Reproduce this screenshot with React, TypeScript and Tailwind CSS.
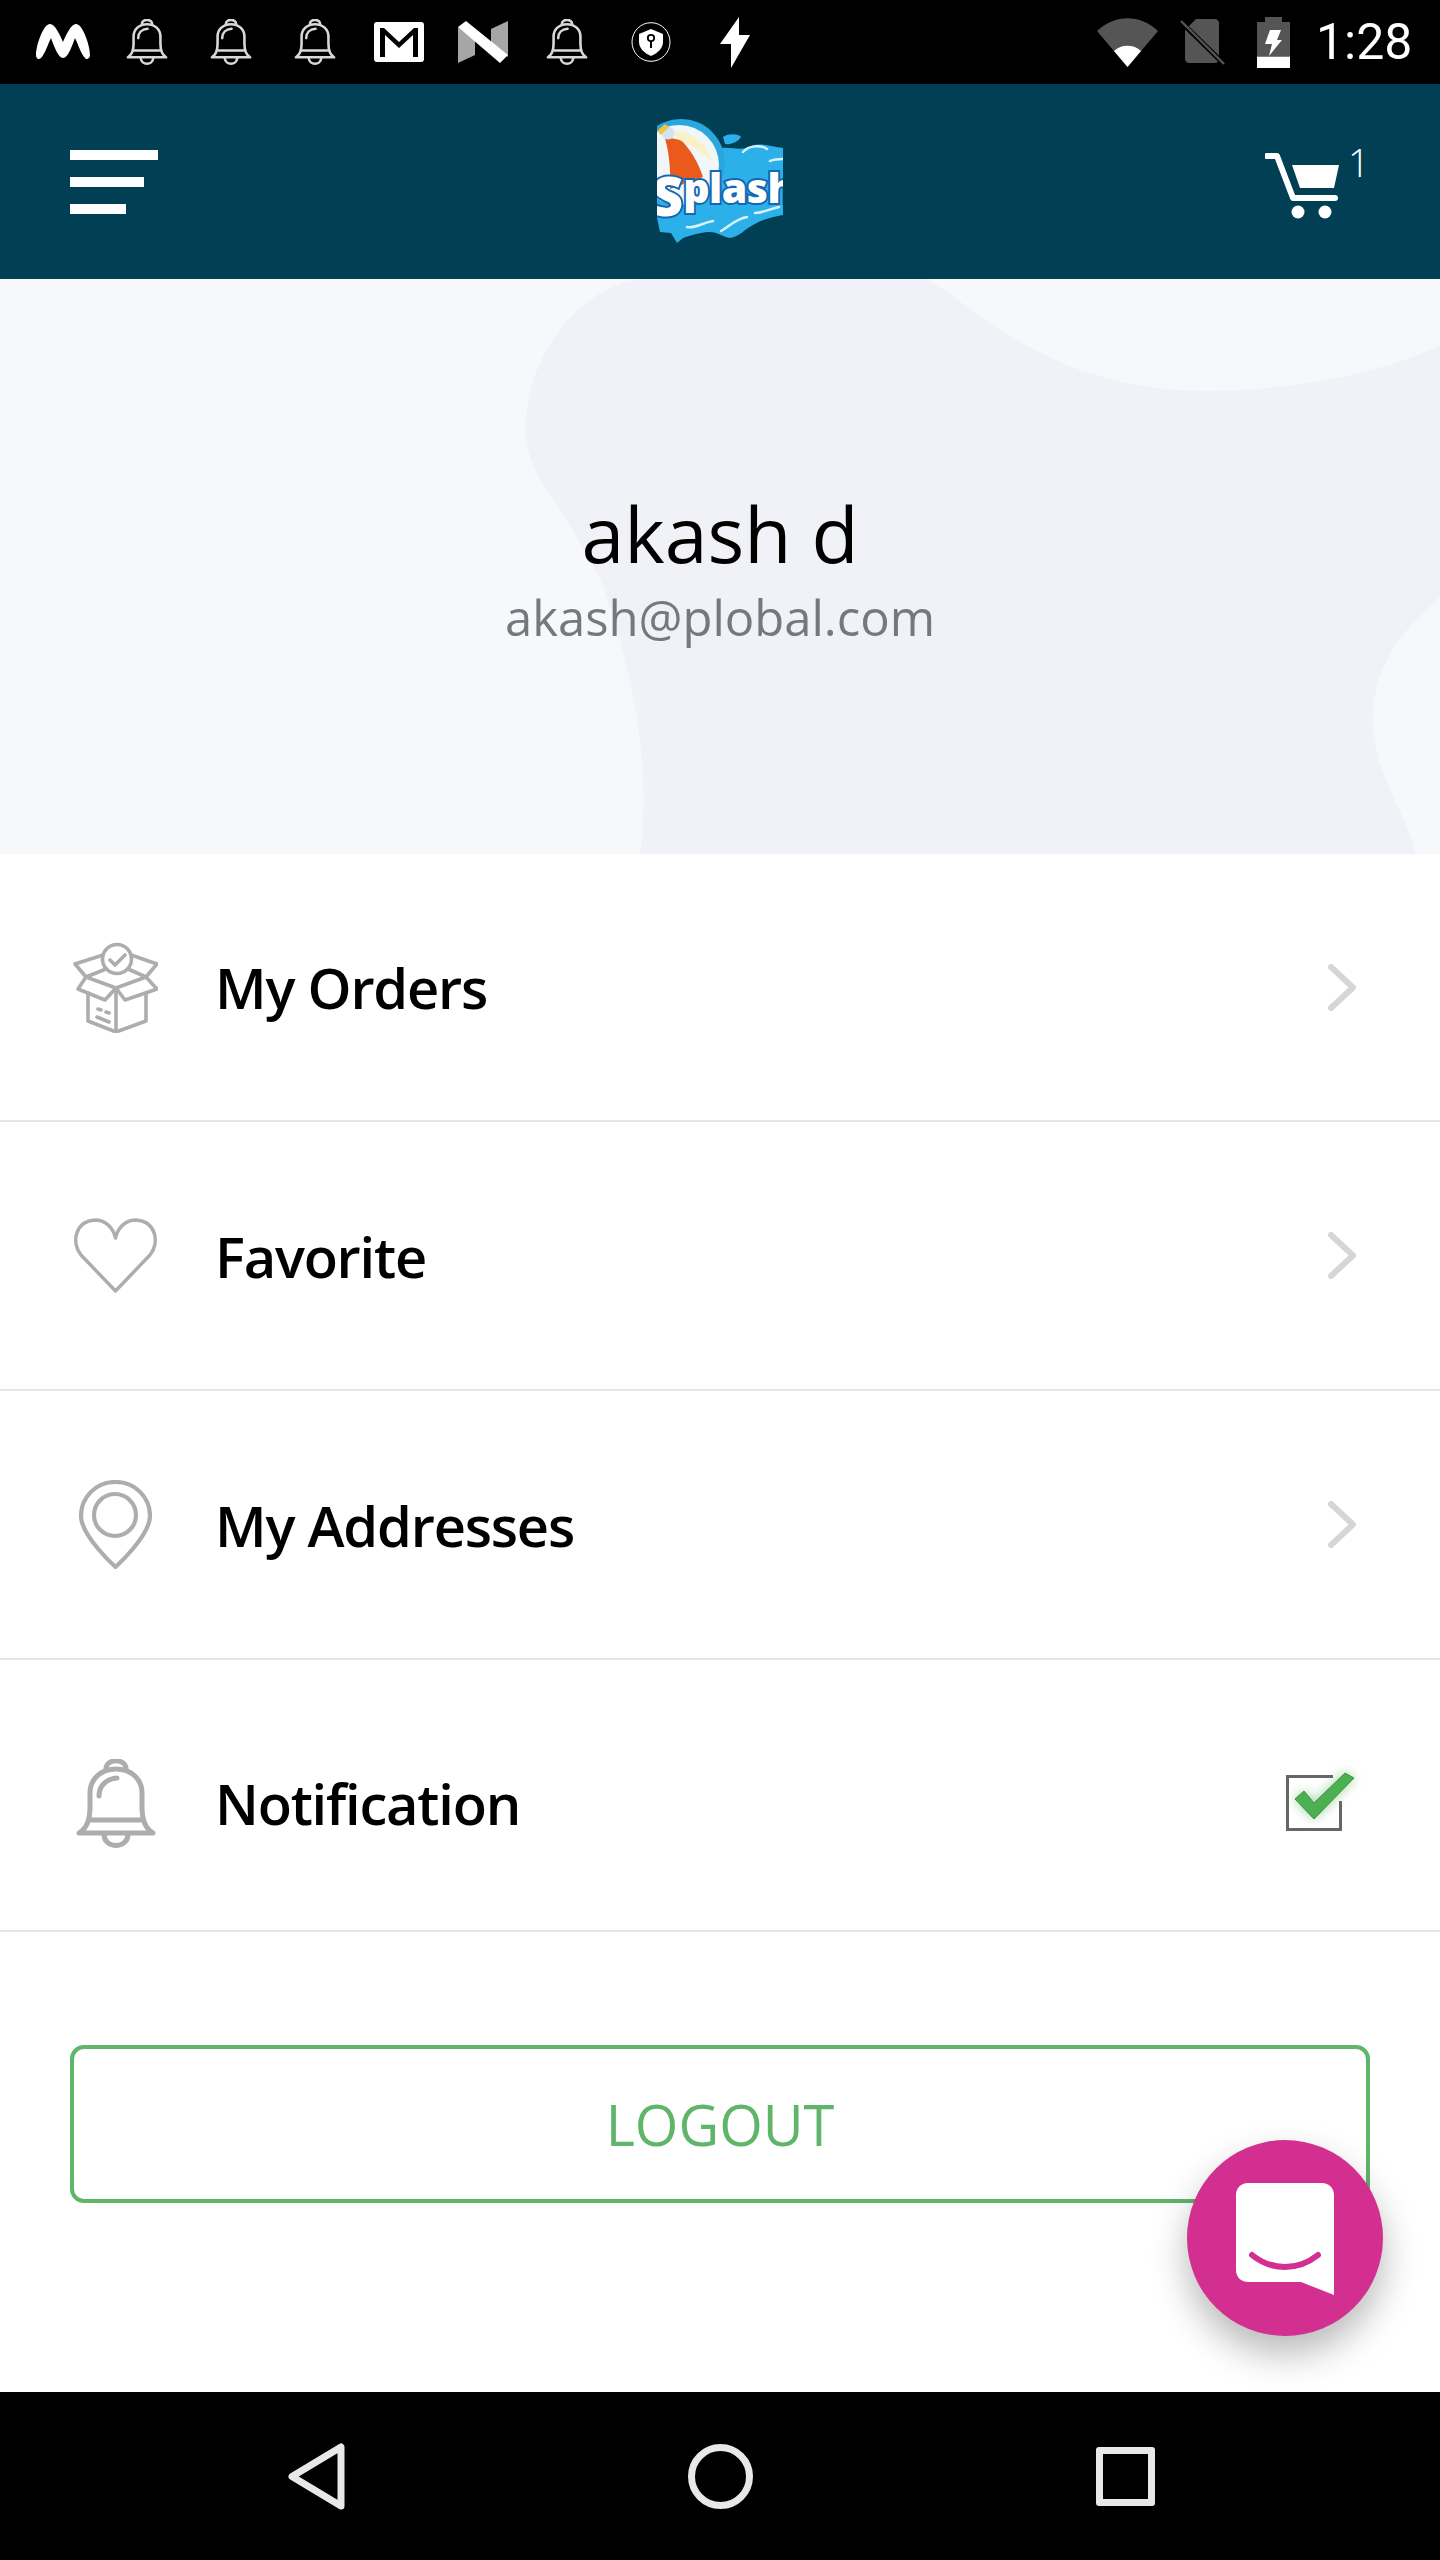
const gray = '#adadad';

function BellIcon({ color = gray, width = 80, height = 89, sw = 5 }: { color?: string; width?: number; height?: number; sw?: number }) {
  return (
    <svg width={width} height={height} viewBox="0 0 80 89" fill="none" stroke={color} strokeWidth={sw} strokeLinecap="round" strokeLinejoin="round">
      <path d="M3 74C10 70 14 62 14 48V34C14 20 25 10 40 10C55 10 66 20 66 34V48C66 62 70 70 77 74Z" />
      <path d="M15 61H65" />
      <path d="M30 10C30 -1 50 -1 50 10" />
      <path d="M28 76C29 90 51 90 52 76" />
      <path d="M23 37C23 27 30 20 41 19" />
    </svg>
  );
}

function BoxIcon() {
  return (
    <svg width={85} height={91} viewBox="0 0 85 91" fill="none" stroke={gray} strokeWidth={3.6} strokeLinejoin="round" strokeLinecap="round">
      <circle cx="44" cy="17" r="14.5" />
      <path d="M37 18L42 23L52 13" />
      <path d="M30 13L2 22L13 35L33 27" />
      <path d="M58 13L84 22L73 35L55 27" />
      <path d="M13 35L43 46L32 58L5 47Z" />
      <path d="M73 35L43 46L52 58L84 47Z" />
      <path d="M15 51V79L43 90L73 79V51" />
      <path d="M43 46V90" />
      <path d="M25 67L28 68M33 70L36 71M24 75L36 80" />
    </svg>
  );
}

function HeartIcon() {
  return (
    <svg width={85} height={76} viewBox="0 0 85 76" fill="none" stroke={gray} strokeWidth={3.4} strokeLinejoin="round">
      <path d="M42.5 73L8 37C-2 25 2 3 22 2C32 2 40 9 42.5 20C45 9 53 2 63 2C83 3 87 25 77 37Z" />
    </svg>
  );
}

function PinIcon() {
  return (
    <svg width={73} height={89} viewBox="0 0 73 89" fill="none" stroke={gray} strokeWidth={4.2} strokeLinejoin="round">
      <path d="M36.5 87C36.5 87 2 56 2 36C2 17 17 2 36.5 2C56 2 71 17 71 36C71 56 36.5 87 36.5 87Z" />
      <circle cx="36" cy="35" r="21" />
    </svg>
  );
}

function Chevron() {
  return (
    <svg width={28} height={47} viewBox="0 0 28 47" fill="none" stroke="#d6d6d6" strokeWidth={6} strokeLinecap="round" strokeLinejoin="round">
      <path d="M3 3L25 23.5L3 44" />
    </svg>
  );
}

function CheckedBox() {
  return (
    <div className="relative h-[56px] w-[56px] border-[3px] border-[#666666]">
      <div className="absolute left-[44px] top-[-3px] h-[26px] w-[12px] bg-white" />
      <svg className="absolute left-[6px] top-[-8px] overflow-visible" width={60} height={50} viewBox="0 0 60 50">
        <path
          d="M0 29L9 21L19 33L50 3L59 8L19 49Z"
          fill="#4caf50"
          stroke="#3f8f45"
          strokeWidth={1}
          className="drop-shadow-[0_0_6px_rgba(76,175,80,0.55)]"
        />
      </svg>
    </div>
  );
}

function MotoLogo() {
  return (
    <svg width={54} height={36} viewBox="0 0 54 36" fill="#ffffff">
      <path d="M0 31C0 22 7 0 14 0C19 0 24 11 27 18C30 11 35 0 40 0C47 0 54 22 54 31C54 35 50 36 49 34C45 30 42 20 39 14C36 22 32 34 27 34C22 34 18 22 15 14C12 20 9 30 5 34C3 36 0 35 0 31Z" />
    </svg>
  );
}

function GmailIcon() {
  return (
    <svg width={50} height={40} viewBox="0 0 50 40">
      <rect width="50" height="40" rx="3" fill="#ffffff" />
      <path d="M6 35V6H10L25 20L40 6H44V35H39V13L25 26L11 13V35Z" fill="#000000" />
    </svg>
  );
}

function NIcon() {
  return (
    <svg width={50} height={42} viewBox="0 0 50 42">
      <path d="M0 6L17 18V34L0 42Z" fill="#a6a6a6" />
      <path d="M33 8L50 0V36L33 24Z" fill="#a6a6a6" />
      <path d="M0 6L8 0L50 34L42 42Z" fill="#ffffff" />
    </svg>
  );
}

function ShieldIcon() {
  return (
    <svg width={40} height={40} viewBox="0 0 40 40">
      <ellipse cx="20" cy="20" rx="19" ry="19.3" fill="none" stroke="#ffffff" strokeWidth={1} />
      <path d="M20 7L32 12V20C32 26 27 31 20 34C13 31 8 26 8 20V12Z" fill="#ffffff" />
      <circle cx="20" cy="16" r="3.2" fill="none" stroke="#000000" strokeWidth={1.8} />
      <path d="M20 19V26" stroke="#000000" strokeWidth={2} />
    </svg>
  );
}

function BoltIcon() {
  return (
    <svg width={30} height={51} viewBox="0 0 30 51" fill="#ffffff">
      <path d="M19 0L0 27H11L11 51L30 18H19Z" />
    </svg>
  );
}

function WifiIcon() {
  return (
    <svg width={61} height={49} viewBox="0 0 61 49">
      <path d="M0 13C18 -4 43 -4 61 13L30.5 49Z" fill="#555555" />
      <path d="M17 33C24 26 37 26 44 33L30.5 49Z" fill="#ffffff" />
    </svg>
  );
}

function SimIcon() {
  return (
    <svg width={45} height={48} viewBox="0 0 45 48">
      <path d="M16 1H35C37 1 39 3 39 5V41C39 43 37 45 35 45H9C7 45 5 43 5 41V12Z" fill="#555555" />
      <path d="M0 3L44 46" stroke="#000000" strokeWidth={5} />
      <path d="M1 3L44 46" stroke="#555555" strokeWidth={2.4} />
    </svg>
  );
}

function BatteryIcon() {
  return (
    <svg width={33} height={51} viewBox="0 0 33 51">
      <path d="M8 0H25V5H33V39H0V5H8Z" fill="#555555" />
      <rect y="39.5" width="33" height="11.5" fill="#ffffff" />
      <path d="M13 13H24L20 23H25L12 39L15 27H8Z" fill="#ffffff" />
    </svg>
  );
}

function CartIcon() {
  return (
    <svg width={74} height={68} viewBox="0 0 74 68" fill="none">
      <path d="M2 5H12L28 47H70" stroke="#ffffff" strokeWidth={6} strokeLinecap="round" strokeLinejoin="round" />
      <path d="M27 14H74L69 37H35Z" fill="#ffffff" />
      <circle cx="33" cy="61" r="6.5" fill="#ffffff" />
      <circle cx="60" cy="61" r="6.5" fill="#ffffff" />
    </svg>
  );
}

function SplashLogo() {
  return (
    <svg width={126} height={126} viewBox="0 0 126 126" className="overflow-hidden">
      {/* splash behind the ball */}
      <path
        d="M60 30C72 26 84 34 96 26C106 24 116 28 126 29V96C116 98 106 100 96 106C88 110 82 118 73 119C66 118 60 112 50 113C42 114 34 116 26 119L20 124L14 114L3 113L0 99V50Z"
        fill="#2cb0ea"
      />
      <path d="M66 18C72 14 82 15 84 18C80 24 72 26 68 25Z" fill="#2cb0ea" />
      <path d="M86 33C92 26 104 26 110 30M113 42C118 40 122 40 126 40" stroke="#d8f2fc" strokeWidth={2.5} fill="none" strokeLinecap="round" />
      {/* beach ball */}
      <circle cx="24" cy="44" r="44" fill="#2aa7de" />
      <circle cx="22" cy="46" r="40" fill="#f1f6f8" />
      <path d="M14 13C32 10 50 24 56 44C50 38 36 26 24 22Z" fill="#fbf1c8" />
      <path d="M8 19C16 19 22 20 26 23C36 34 42 46 46 58L13 70C14 50 12 34 8 19Z" fill="#ea5a1c" />
      <circle cx="11" cy="14" r="6.5" fill="#cfe6f0" />
      <path d="M0 12L8 5L12 8L4 16Z" fill="#f4c23d" />
      {/* wordmark */}
      <text
        x="-5"
        fontFamily="'Open Sans', sans-serif"
        fontWeight={800}
        fill="#ffffff"
        stroke="#1268b3"
        strokeWidth={4}
        paintOrder="stroke"
      >
        <tspan y="97" fontSize={54}>S</tspan>
        <tspan y="84" fontSize={41} letterSpacing={-0.5}>plash</tspan>
      </text>
      <path d="M30 108C38 110 44 104 56 102M64 112C72 108 78 100 90 98M98 94C106 94 112 90 122 88" stroke="#d8f2fc" strokeWidth={2.5} fill="none" strokeLinecap="round" />
    </svg>
  );
}

function Blob() {
  return (
    <svg className="absolute inset-0" width={1440} height={575} viewBox="0 279 1440 575">
      <path
        d="M640 854C650 780 640 690 600 578C560 500 520 470 526 420C532 340 590 285 640 279H925C970 300 1040 385 1190 391C1280 393 1380 375 1440 345V597C1390 640 1370 680 1373 730C1378 780 1405 810 1416 854Z"
        fill="#f1f2f7"
      />
    </svg>
  );
}

function MenuRow({ icon, label, right, h }: { icon: React.ReactNode; label: string; right: React.ReactNode; h: string }) {
  return (
    <div className={`flex items-center border-b-2 border-[#e6e6e6] ${h}`}>
      <div className="ml-[73px] flex w-[85px] shrink-0 justify-center">{icon}</div>
      <span className="ml-[57px] flex-1 text-[56px] font-semibold tracking-[-1.2px] text-black">{label}</span>
      {right}
    </div>
  );
}

function Messenger() {
  return (
    <div className="absolute left-[1187px] top-[2140px] flex h-[196px] w-[196px] items-center justify-center rounded-full bg-[#d32f91] shadow-[0_18px_36px_rgba(0,0,0,0.28)]">
      <svg className="mt-[2px]" width={98} height={112} viewBox="0 0 98 112">
        <path d="M12 0H86C93 0 98 5 98 12V112L65 99H12C5 99 0 94 0 87V12C0 5 5 0 12 0Z" fill="#ffffff" />
        <path d="M16 72C36 88 62 88 82 72" fill="none" stroke="#d32f91" strokeWidth={6} strokeLinecap="round" />
      </svg>
    </div>
  );
}

export default function App() {
  return (
    <div className="relative flex h-[2560px] w-[1440px] flex-col overflow-hidden bg-white font-['Open_Sans',sans-serif]">
      <div className="flex h-[84px] shrink-0 items-center bg-black">
        <div className="ml-[36px]"><MotoLogo /></div>
        <div className="ml-[36px]"><BellIcon color="#d8d8d8" width={42} height={46} sw={5} /></div>
        <div className="ml-[42px]"><BellIcon color="#d8d8d8" width={42} height={46} sw={5} /></div>
        <div className="ml-[42px]"><BellIcon color="#d8d8d8" width={42} height={46} sw={5} /></div>
        <div className="ml-[38px]"><GmailIcon /></div>
        <div className="ml-[34px]"><NIcon /></div>
        <div className="ml-[38px]"><BellIcon color="#d8d8d8" width={42} height={46} sw={5} /></div>
        <div className="ml-[43px]"><ShieldIcon /></div>
        <div className="ml-[49px]"><BoltIcon /></div>
        <div className="ml-[347px]"><WifiIcon /></div>
        <div className="ml-[22px]"><SimIcon /></div>
        <div className="ml-[32px]"><BatteryIcon /></div>
        <span className="ml-[26px] font-['Roboto',sans-serif] text-[50px] leading-none text-white">1:28</span>
      </div>

      <div className="flex h-[195px] shrink-0 items-center justify-between bg-[#003f54]">
        <div className="ml-[70px] flex w-[88px] flex-col gap-[17px]">
          <div className="h-[10px] w-[88px] bg-white" />
          <div className="h-[10px] w-[74px] bg-white" />
          <div className="h-[10px] w-[56px] bg-white" />
        </div>
        <div className="ml-[499px]"><SplashLogo /></div>
        <div className="ml-[482px] mr-[77px] mt-[6px] flex flex-1 items-start">
          <CartIcon />
          <span className="ml-[9px] mt-[-14px] text-[38px] font-light leading-[50px] text-white">1</span>
        </div>
      </div>

      <div className="relative flex h-[575px] shrink-0 flex-col items-center bg-[#f7f8fc] pt-[206px]">
        <Blob />
        <span className="relative text-[77px] leading-[98px] text-black">akash d</span>
        <span className="relative text-[49px] leading-[68px] text-[#77787d]">akash@plobal.com</span>
      </div>

      <MenuRow h="h-[268px]" icon={<BoxIcon />} label="My Orders" right={<div className="mr-[84px]"><Chevron /></div>} />
      <MenuRow h="h-[269px]" icon={<HeartIcon />} label="Favorite" right={<div className="mr-[84px]"><Chevron /></div>} />
      <MenuRow h="h-[269px]" icon={<PinIcon />} label="My Addresses" right={<div className="mr-[84px]"><Chevron /></div>} />
      <MenuRow h="h-[272px] pt-[16px]" icon={<BellIcon />} label="Notification" right={<div className="mr-[98px]"><CheckedBox /></div>} />

      <div className="px-[70px] pt-[113px]">
        <div className="flex h-[158px] items-center justify-center rounded-[14px] border-4 border-[#5fb56a] text-[56px] text-[#5fb56a]">
          LOGOUT
        </div>
      </div>

      <div className="mt-auto flex h-[168px] shrink-0 items-center bg-black">
        <svg className="ml-[288px]" width={57} height={67} viewBox="0 0 57 67" fill="none" stroke="#e8e8e8" strokeWidth={7} strokeLinejoin="round">
          <path d="M53 4V63L4 33.5Z" />
        </svg>
        <div className="ml-[343px] h-[65px] w-[65px] rounded-full border-[7px] border-[#e8e8e8]" />
        <div className="ml-[343px] h-[59px] w-[59px] rounded-[3px] border-[7px] border-[#e8e8e8]" />
      </div>

      <Messenger />
    </div>
  );
}
